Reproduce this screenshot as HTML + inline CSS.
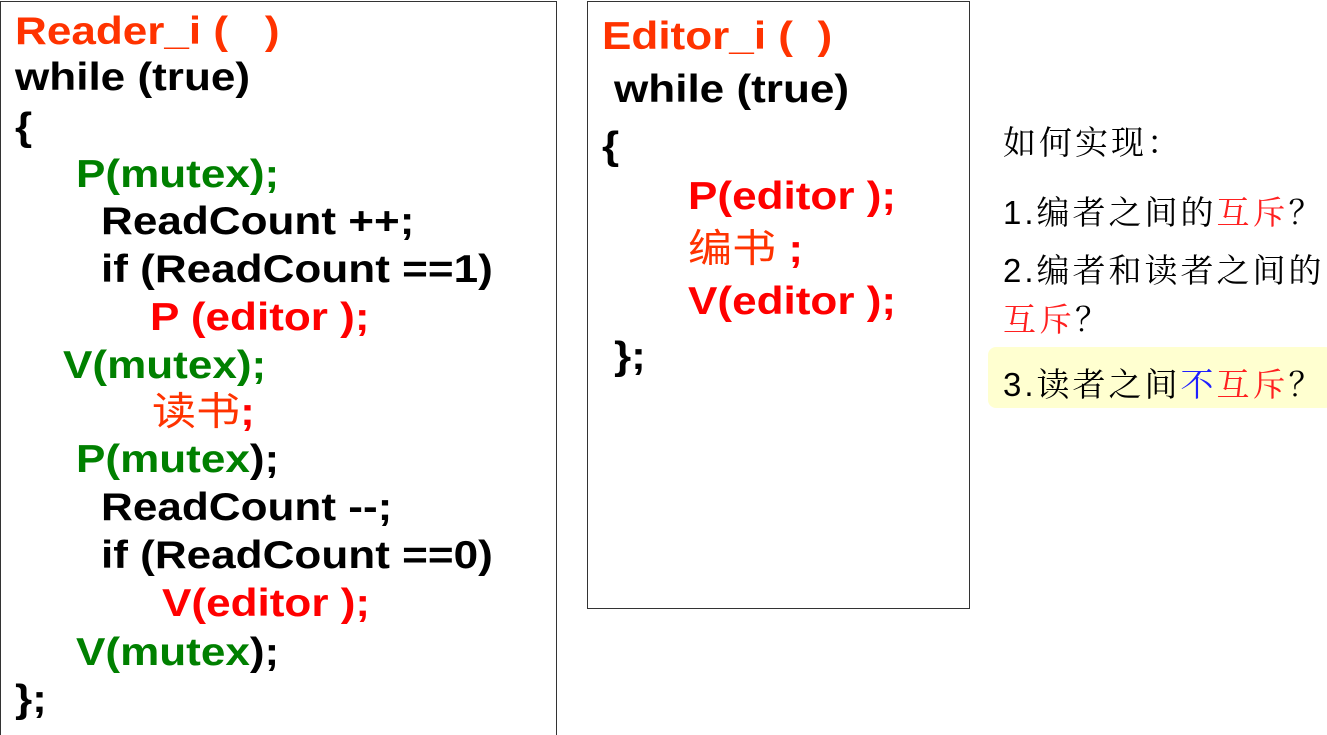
<!DOCTYPE html>
<html style="overflow:hidden;height:735px"><head><meta charset="utf-8"><style>
body{margin:0;width:1327px;height:735px;background:#fff;position:relative;overflow:hidden;font-family:"Liberation Sans","Noto Sans CJK SC",sans-serif;}
.b{position:absolute;border:1.5px solid #333;box-sizing:border-box;}
.t{position:absolute;font-weight:bold;font-size:39px;line-height:40px;white-space:pre;color:#000;transform:scaleX(1.13);transform-origin:0 0;}
.o{color:#ff3300}.g{color:#008000}.r{color:#ff0000}
.c{position:absolute;font-family:"Liberation Sans","Noto Serif CJK SC",serif;font-size:33px;line-height:34px;letter-spacing:3px;white-space:pre;color:#000;}
.q{font-family:"Noto Serif CJK SC",serif;}
</style></head><body>
<div class="b" style="left:0;top:1px;width:557px;height:734px;border-bottom:none"></div>
<div class="b" style="left:587px;top:1px;width:383px;height:608px"></div>
<div style="position:absolute;left:988px;top:347px;width:345px;height:61px;background:#ffffd0;border-radius:8px"></div>

<div class="t o" style="left:15px;top:12px">Reader_i (   )</div>
<div class="t" style="left:15px;top:58px">while (true)</div>
<div class="t" style="left:15px;top:108px">{</div>
<div class="t g" style="left:76px;top:155px">P(mutex);</div>
<div class="t" style="left:101px;top:202px">ReadCount ++;</div>
<div class="t" style="left:101px;top:250px">if (ReadCount ==1)</div>
<div class="t r" style="left:150px;top:298px">P (editor );</div>
<div class="t g" style="left:63px;top:346px">V(mutex);</div>
<div class="t" style="left:152px;top:393px"><span style="color:#ff3300;font-weight:normal">读书</span><span class="r">;</span></div>
<div class="t" style="left:76px;top:440px"><span class="g">P(mutex</span>);</div>
<div class="t" style="left:101px;top:488px">ReadCount --;</div>
<div class="t" style="left:101px;top:536px">if (ReadCount ==0)</div>
<div class="t r" style="left:162px;top:584px">V(editor );</div>
<div class="t" style="left:76px;top:633px"><span class="g">V(mutex</span>);</div>
<div class="t" style="left:15px;top:680px">};</div>

<div class="t o" style="left:602px;top:17px">Editor_i (  )</div>
<div class="t" style="left:614px;top:70px">while (true)</div>
<div class="t" style="left:602px;top:127px">{</div>
<div class="t r" style="left:688px;top:177px">P(editor );</div>
<div class="t" style="left:688px;top:230px"><span style="color:#ff3300;font-weight:normal">编书</span><span class="r"> ;</span></div>
<div class="t r" style="left:688px;top:282px">V(editor );</div>
<div class="t" style="left:614px;top:337px">};</div>

<div class="c" style="left:1003px;top:124px">如何实现<span class="q">：</span></div>
<div class="c" style="left:1003px;top:194px">1.编者之间的<span style="color:#ff2020">互斥</span><span class="q">？</span></div>
<div class="c" style="left:1003px;top:254px">2.编者和读者之间的</div>
<div class="c" style="left:1003px;top:301px"><span style="color:#ff2020">互斥</span><span class="q">？</span></div>
<div class="c" style="left:1003px;top:366px">3.读者之间<span style="color:#2020ff">不</span><span style="color:#ff2020">互斥</span><span class="q">？</span></div>
</body></html>
